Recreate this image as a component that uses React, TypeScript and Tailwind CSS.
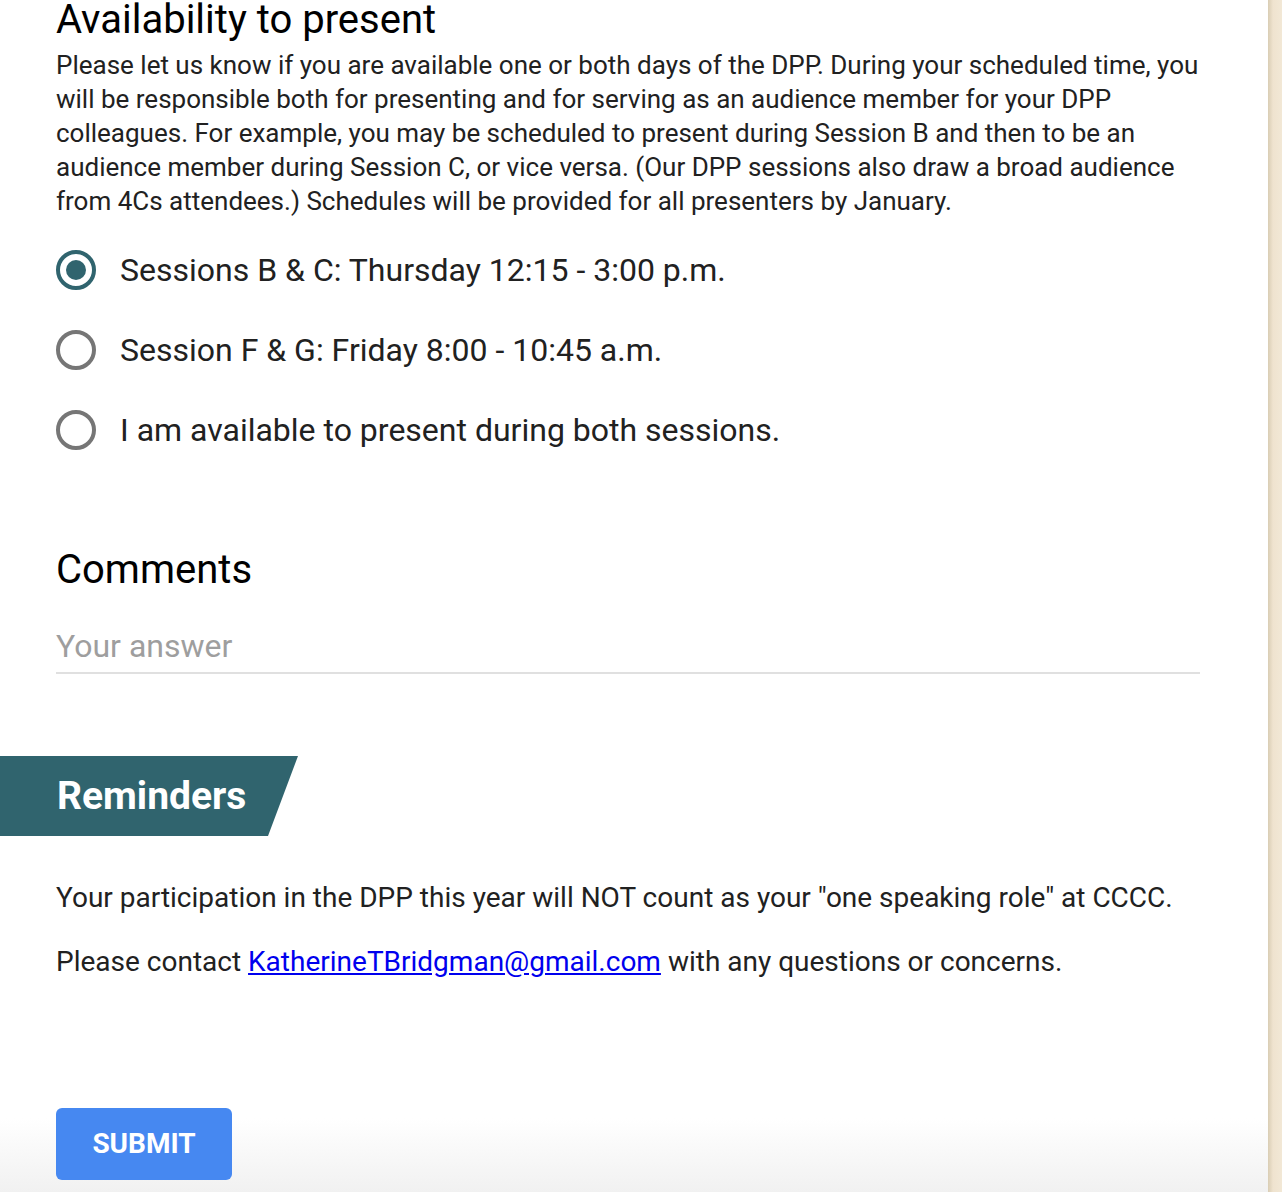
export default function App() {
  return (
    <div className="flex h-[1192px] w-full overflow-hidden font-['Roboto',sans-serif] text-[#212121]">
      <div className="flex w-[1268px] flex-col bg-[linear-gradient(to_bottom,#ffffff_1118px,#f1f1f1_1192px)]">
        <div className="px-[56px]">
          <h1 className="-mt-[2px] text-[40px] leading-[44px] text-black">Availability to present</h1>
          <p className="mt-[6px] w-[1150px] text-[26px] leading-[34px]">
            Please let us know if you are available one or both days of the DPP. During your scheduled time, you will be responsible both for presenting and for serving as an audience member for your DPP colleagues. For example, you may be scheduled to present during Session B and then to be an audience member during Session C, or vice versa. (Our DPP sessions also draw a broad audience from 4Cs attendees.) Schedules will be provided for all presenters by January.
          </p>

          <div className="mt-[32px] flex flex-col gap-10">
            <RadioRow checked label="Sessions B & C: Thursday 12:15 - 3:00 p.m." />
            <RadioRow label="Session F & G: Friday 8:00 - 10:45 a.m." />
            <RadioRow label="I am available to present during both sessions." />
          </div>

          <h2 className="mt-[98px] text-[40px] leading-[44px] text-black">Comments</h2>
          <div className="mt-[35px] w-[1144px] border-b-2 border-[#e0e0e0] pb-[7px] text-[32px] leading-[38px] text-[#9e9e9e]">
            Your answer
          </div>
        </div>

        <div className="mt-[82px] flex h-[80px] w-[298px] items-center bg-[#30646e] pl-[57px] [clip-path:polygon(0_0,100%_0,268px_100%,0_100%)]">
          <span className="text-[39px] font-bold leading-none text-white">Reminders</span>
        </div>

        <div className="px-[56px]">
          <p className="mt-[46px] text-[28px] leading-[32px]">
            Your participation in the DPP this year will NOT count as your "one speaking role" at CCCC.
          </p>
          <p className="mt-[32px] text-[28px] leading-[32px]">
            Please contact <a href="#" className="text-[#0000ee] underline">KatherineTBridgman@gmail.com</a> with any questions or concerns.
          </p>

          <button className="mt-[130px] flex h-[72px] w-[176px] items-center justify-center rounded-[6px] bg-[#4688f1] text-[28px] font-bold text-white">
            SUBMIT
          </button>
        </div>
      </div>
      <div className="flex-1 bg-[linear-gradient(to_right,#d9cdb4,#efe3cf_5px,#f2e8d6)]" />
    </div>
  );
}

function RadioRow({ label, checked }: { label: string; checked?: boolean }) {
  return (
    <div className="flex h-[40px] items-center gap-[24px]">
      <span
        className={
          checked
            ? "flex h-[40px] w-[40px] items-center justify-center rounded-full border-[4px] border-[#30646e]"
            : "flex h-[40px] w-[40px] items-center justify-center rounded-full border-[4px] border-[#767676]"
        }
      >
        {checked && <span className="h-[20px] w-[20px] rounded-full bg-[#30646e]" />}
      </span>
      <span className="text-[32px] leading-[40px]">{label}</span>
    </div>
  );
}
